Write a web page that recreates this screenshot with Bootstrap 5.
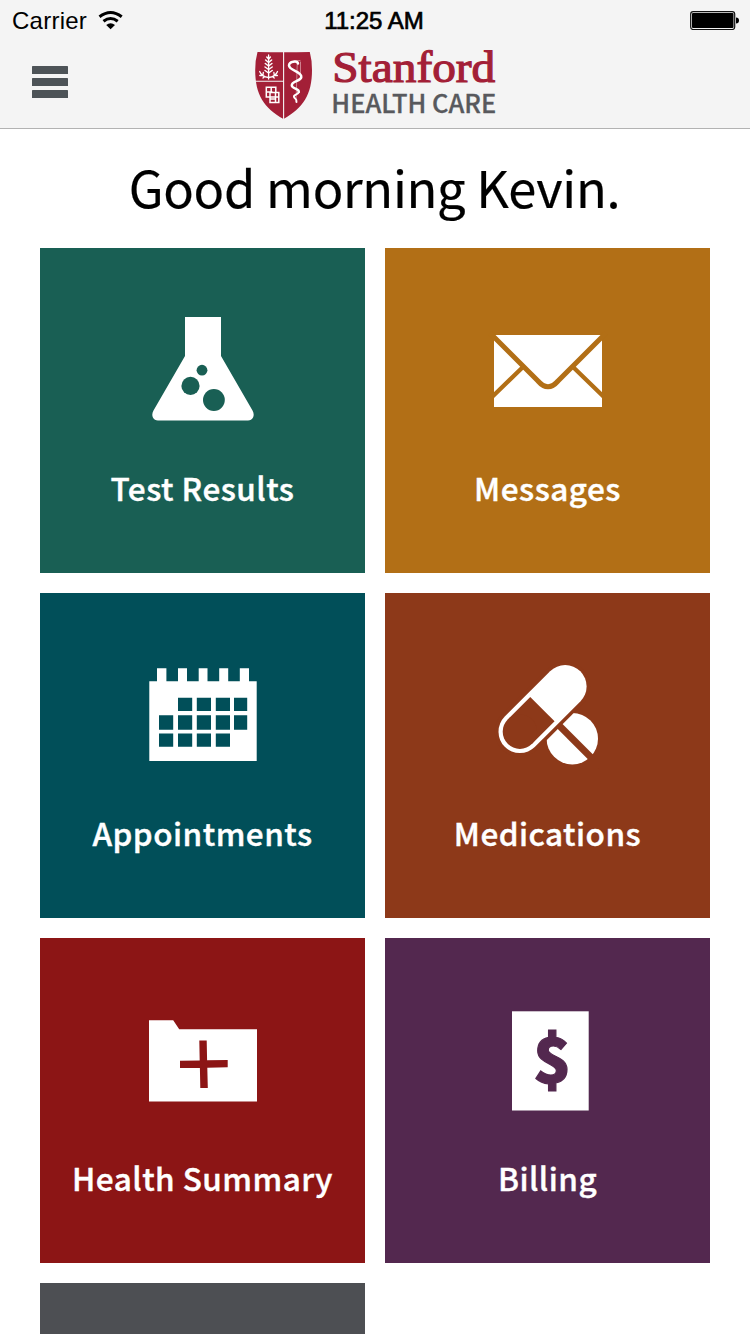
<!DOCTYPE html>
<html lang="en">
<head>
<meta charset="utf-8">
<meta name="viewport" content="width=device-width, initial-scale=1">
<title>Stanford Health Care</title>
<link href="https://cdn.jsdelivr.net/npm/bootstrap@5.3.0/dist/css/bootstrap.min.css" rel="stylesheet">
<style>
  body { font-family: "Noto Sans CJK SC", "Open Sans", sans-serif; color: #000; background: #fff; }
  .screen { height: 100vh; }
  .topbar { height: 129px; background: #f4f4f4; border-bottom: 1px solid #b2b2b2; }
  .statusbar { height: 40px; padding: 0 11px 0 12px; font: 24px/40px "Liberation Sans", sans-serif; }
  .statusbar > * { flex: 1 1 0; }
  .carrier { letter-spacing: .25px; padding-top: 1px; }
  .carrier svg { margin-top: -1px; }
  .clock { -webkit-text-stroke: .7px #000; letter-spacing: 0; padding: 1px 3px 0 0; }
  .brandbar { height: 88px; padding: 0 32px; }
  .brandbar > * { flex: 1 1 0; }
  .menu-btn { width: 36px; height: 32px; margin-top: -4px; }
  .brand-logo { flex: 0 0 242px; margin-top: -10px; }
  .greeting { height: 119px; font-size: 50.6px; line-height: 115px; letter-spacing: -.3px; padding-right: 1px; -webkit-text-stroke: .2px #000; }
  .tiles { padding: 0 40px; }
  .tiles .row { --bs-gutter-x: 20px; --bs-gutter-y: 20px; }
  .tile { height: 325px; padding-top: 60px; color: #fff; text-decoration: none; font-weight: 500; font-size: 31.5px; line-height: 48px; letter-spacing: .48px; -webkit-text-stroke: .4px #fff; }
  .tile svg { width: 121px; height: 120px; margin-bottom: 35px; -webkit-text-stroke: 0; }
  .tests { background: #195f54; --tile: #195f54; }
  .messages { background: #b26f16; --tile: #b26f16; }
  .appointments { background: #014f59; --tile: #014f59; }
  .medications { background: #8d3919; --tile: #8d3919; }
  .summary { background: #8c1515; --tile: #8c1515; }
  .billing { background: #53284f; --tile: #53284f; }
  .more { background: #4d4f53; }
  .ink { fill: var(--tile); }
  .cut { stroke: var(--tile); fill: none; }
</style>
</head>
<body>
<div class="screen overflow-hidden">
  <header class="topbar">
    <div class="statusbar d-flex align-items-center">
      <div class="carrier d-flex align-items-center">Carrier
        <svg class="ms-2" width="30" height="24" viewBox="95 8 30 24"><g fill="none" stroke="#000" stroke-width="3"><path d="M99.500 16.800Q110.600 8.200 121.700 16.800"/><path d="M103.500 21.300Q110.600 15.700 117.700 21.300"/></g><path d="M106.200 25Q110.600 21.400 115 25L110.600 29.300Z"/></svg>
      </div>
      <div class="clock text-center">11:25 AM</div>
      <div class="d-flex justify-content-end">
        <svg width="49" height="20" viewBox="690 10 49 20"><rect x="690.700" y="11.700" width="44" height="17.800" rx="2.500" fill="none" stroke="#111" stroke-width="1.200"/><rect x="692" y="13" width="41.500" height="15" rx="1"/><path d="M736 17.500Q739 17.500 739 20.500T736 23.500Z"/></svg>
      </div>
    </div>
    <div class="brandbar d-flex align-items-center">
      <div><button class="menu-btn btn p-0 border-0 d-block" aria-label="Menu"><svg class="d-block" width="36" height="32" viewBox="0 0 36 32" fill="#4d5357"><rect width="36" height="8" rx=".6"/><rect y="12" width="36" height="8" rx=".6"/><rect y="24" width="36" height="8" rx=".6"/></svg></button></div>
      <svg class="brand-logo overflow-visible" height="82" viewBox="254 38 242 82" role="img">
        <path fill="#a31f37" d="M257.500 52Q283.500 52.500 309.800 52Q312 60 312 70C312 95 303 108 283.500 119C264 108 255.200 95 255.200 70Q255.200 60 257.500 52Z"/>
        <path d="M283.600 52V119M255.500 81.300H283.500" stroke="#f4f4f4" stroke-width="1.100" fill="none"/>
        <g fill="none" stroke="#fff" stroke-width="1.300" stroke-linecap="round">
          <path d="M268.600 55V79"/>
          <path stroke-width="1.500" d="M268.600 59l-1.800-2M268.600 59l1.800-2M268.600 62.500l-3-2.500M268.600 62.500l3-2.500M268.600 66l-3.300-2.500M268.600 66l3.300-2.500M268.600 69.500l-3.600-2.500M268.600 69.500l3.600-2.500M268.600 73l-3.600-2.500M268.600 73l3.600-2.500"/>
          <path d="M268.600 77.500C264 77 261 75 259.700 71.500M268.600 77.500C273.200 77 276.200 75 277.500 71.500M262.500 75.500l-2.700 0M264.500 76.500l-1.500 1.500M263 75l.3-2.500M274.700 75.500l2.700 0M272.700 76.500l1.500 1.500M274.200 75l-.3-2.500"/>
          <g stroke-linecap="butt" stroke-width="1.500"><path d="M266.300 87.300H275.800V92.500H278.800V102.500H270V97H266.300ZM266.300 92H272.500M271.200 87.300V92M275.800 92.500H270V97H275.500M275.500 92.500V102.500M270.500 99H275.500M275.500 97H279"/></g>
          <path stroke-width=".8" stroke="#d99aa5" d="M297.300 62L296 102M294 61l6-.5M300.500 62V76"/>
          <path stroke-width="2.500" d="M298 63.500C297.500 60.500 289 61 289 65.500C289 70.500 302 71.500 301.300 77C300.800 81.500 291.500 81 291.800 85.500C292 89 299.300 88.500 298.800 92"/>
          <path stroke-width="1.900" d="M298.800 92C298.300 95 293 94.500 294 97C294.500 99 297 98.500 296.500 102"/>
        </g>
        <text x="332.300" y="82.300" font-family="Liberation Serif, serif" font-size="45" textLength="163" lengthAdjust="spacingAndGlyphs" fill="#a31f37" stroke="#a31f37" stroke-width="1.200">Stanford</text>
        <text x="331.300" y="112.800" font-family="Noto Sans CJK SC, sans-serif" font-size="25" font-weight="500" textLength="165" lengthAdjust="spacingAndGlyphs" fill="#58595d" stroke="#58595d" stroke-width=".3">HEALTH CARE</text>
      </svg>
      <div></div>
    </div>
  </header>
  <main>
    <h1 class="greeting text-center fw-normal m-0">Good morning Kevin.</h1>
    <nav class="tiles">
      <div class="row row-cols-2 mt-0">
        <div class="col mt-0"><a href="#" class="tile tests d-flex flex-column align-items-center">
          <svg viewBox="142 308 121 120"><path fill="#fff" d="M185 317H221V356L252.500 410.500C255.500 416 252.500 420.500 248 420.500H158C153.500 420.500 150.500 416 153.500 410.500L185 356Z"/><g class="ink"><circle cx="202" cy="370.200" r="5.400"/><circle cx="190.500" cy="385.900" r="9.100"/><circle cx="213.900" cy="400" r="10.900"/></g></svg>
          <span>Test Results</span></a></div>
        <div class="col mt-0"><a href="#" class="tile messages d-flex flex-column align-items-center">
          <svg viewBox="487 308 121 120"><rect x="494" y="335" width="108" height="72" fill="#fff"/><g class="cut"><path stroke-width="5" d="M490 333L538 381Q548 392.500 558 381L606 333"/><path stroke-width="4.300" d="M491 398L524 366M605 398L572 366"/></g></svg>
          <span>Messages</span></a></div>
        <div class="col"><a href="#" class="tile appointments d-flex flex-column align-items-center">
          <svg viewBox="142 653 121 120"><path fill="#fff" d="M149.300 681.300H157V668.300H166.400V681.300H178V668.300H187V681.300H198.700V668.300H207.500V681.300H219.200V668.300H228.200V681.300H239.800V668.300H249V681.300H256.700V761H149.300Z"/><path class="ink" d="M178 697.800h14.200v13.200h-14.200zM196.800 697.800h14.200v13.200h-14.200zM215.800 697.800h14.200v13.200h-14.200zM234 697.800h13.200v13.200h-13.200zM159 715.200h14.200v14.500h-14.200zM178 715.200h14.200v14.500h-14.200zM196.800 715.200h14.200v14.500h-14.200zM215.800 715.200h14.200v14.500h-14.200zM234 715.200h13.200v14.500h-13.200zM159 733.500h14.200v13.200h-14.200zM178 733.500h14.200v13.200h-14.200zM196.800 733.500h14.200v13.200h-14.200zM215.800 733.500h14.200v13.200h-14.200z"/></svg>
          <span>Appointments</span></a></div>
        <div class="col"><a href="#" class="tile medications d-flex flex-column align-items-center">
          <svg viewBox="487 653 121 120"><circle cx="572.300" cy="738.700" r="25.700" fill="#fff"/><g class="cut"><path stroke-width="7" d="M550 716.400L600 766.400"/><path stroke-width="50" stroke-linecap="round" d="M519.700 731.700L565 686.400"/></g><path stroke="#fff" stroke-width="42.800" stroke-linecap="round" d="M519.900 731.700L565.200 686.400"/><path class="cut" stroke-width="34.400" d="M519.900 731.700L542.400 709.200"/><circle class="ink" cx="519.900" cy="731.700" r="17.200"/></svg>
          <span>Medications</span></a></div>
        <div class="col"><a href="#" class="tile summary d-flex flex-column align-items-center">
          <svg viewBox="142 998 121 120"><path fill="#fff" d="M149 1020.300H173.200L179.200 1029.300H257V1101.500H149Z"/><path class="ink" d="M199.300 1040.500H206.700L207.100 1060.300L227.700 1060V1067.300L207.300 1067.700L207.800 1088H200.300L199.900 1068H180V1060.800L199.700 1060.500Z"/></svg>
          <span>Health Summary</span></a></div>
        <div class="col"><a href="#" class="tile billing d-flex flex-column align-items-center">
          <svg viewBox="487 998 121 120"><rect x="512" y="1011.300" width="76.700" height="99.200" fill="#fff"/><text class="ink" x="552.300" y="1083.400" text-anchor="middle" font-family="Noto Sans CJK SC, sans-serif" font-size="62.500" font-weight="900" letter-spacing="0" stroke="#53284f" stroke-width="1.200">$</text></svg>
          <span>Billing</span></a></div>
        <div class="col"><div class="tile more"></div></div>
      </div>
    </nav>
  </main>
</div>
<script src="https://cdn.jsdelivr.net/npm/bootstrap@5.3.0/dist/js/bootstrap.bundle.min.js"></script>
</body>
</html>
